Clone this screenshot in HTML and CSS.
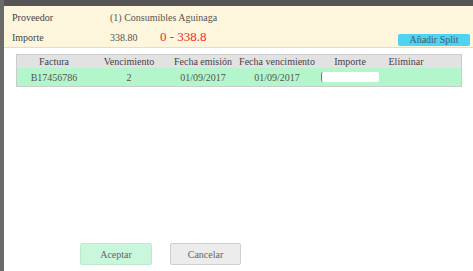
FILE: index.html
```html
<!DOCTYPE html>
<html>
<head>
<meta charset="utf-8">
<link rel="stylesheet" href="styles.css">
</head>
<body>
<div class="backdrop">
  <div class="modal">
    <div class="head">
      <div class="hrow">
        <span class="lbl">Proveedor</span>
        <span class="val">(1) Consumibles Aguinaga</span>
      </div>
      <div class="hrow">
        <span class="lbl">Importe</span>
        <span class="val amt">338.80</span>
        <span class="diff">0 - 338.8</span>
        <button class="split">Añadir Split</button>
      </div>
    </div>
    <div class="body">
      <table class="grid">
        <thead>
          <tr>
            <th class="c1">Factura</th>
            <th class="c2">Vencimiento</th>
            <th class="c3">Fecha emisión</th>
            <th class="c4">Fecha vencimiento</th>
            <th class="c5">Importe</th>
            <th class="c6">Eliminar</th>
            <th class="c7"></th>
          </tr>
        </thead>
        <tbody>
          <tr>
            <td>B17456786</td>
            <td>2</td>
            <td>01/09/2017</td>
            <td>01/09/2017</td>
            <td><input class="inp" type="text"></td>
            <td></td>
            <td></td>
          </tr>
        </tbody>
      </table>
    </div>
    <div class="foot">
      <button class="btn ok">Aceptar</button>
      <button class="btn cancel">Cancelar</button>
    </div>
  </div>
</div>
</body>
</html>
```
FILE: styles.css
```css
html, body {
  margin: 0;
  padding: 0;
  width: 473px;
  height: 271px;
  overflow: hidden;
  font-family: "Liberation Serif", "Times New Roman", serif;
  font-size: 10px;
  color: #333;
}
.backdrop {
  width: 473px;
  height: 271px;
  background: #555;
  border-left: 4px solid #6a6a6a;
  box-sizing: border-box;
  padding-top: 6px;
}
.modal {
  background: #fff;
  height: 265px;
  display: flex;
  flex-direction: column;
}
.head {
  background: #fdf6dc;
  border-bottom: 1px solid #ddd;
  height: 42px;
  box-sizing: border-box;
  padding: 2px 3px 0 8px;
  display: flex;
  flex-direction: column;
}
.hrow {
  display: flex;
  align-items: center;
  height: 20px;
}
.lbl {
  width: 98px;
  color: #444;
}
.val {
  color: #555;
}
.amt {
  width: 50px;
}
.diff {
  color: #f02a2a;
  font-size: 13px;
  font-family: "Liberation Serif", serif;
}
.split {
  margin-left: auto;
  margin-top: 5px;
  width: 72px;
  height: 12px;
  padding: 0;
  border: none;
  border-radius: 2px;
  background: #4fd3f0;
  color: #3a6070;
  font-family: "Liberation Serif", serif;
  font-size: 10px;
  line-height: 12px;
}
.body {
  flex: 1;
  padding: 6px 11px 0 12px;
}
.grid {
  width: 446px;
  border-collapse: collapse;
  border: 1px solid #ccc;
  font-size: 10px;
}
.grid th {
  background: #e2e2e2;
  font-weight: normal;
  color: #444;
  height: 13px;
  padding: 0;
  text-align: center;
}
.grid td {
  background: #b4f6cb;
  height: 18px;
  padding: 0;
  text-align: center;
  color: #555;
}
.c1 { width: 74px; }
.c2 { width: 76px; }
.c3 { width: 72px; }
.c4 { width: 76px; }
.c5 { width: 70px; }
.c6 { width: 42px; }
.inp {
  width: 53px;
  height: 10px;
  border: none;
  border-radius: 2px;
  background: #fff;
  padding: 0 2px;
  display: block;
  margin-left: 6px;
  border-left: 1px solid #777;
}
.foot {
  display: flex;
  gap: 18px;
  padding: 0 0 6px 76px;
  height: 22px;
}
.btn {
  width: 72px;
  height: 22px;
  font-family: "Liberation Serif", serif;
  font-size: 10px;
  border-radius: 2px;
  color: #666;
}
.ok {
  background: #c9f7dc;
  border: 1px solid #bfe8cf;
}
.cancel {
  width: 71px;
  background: #ececec;
  border: 1px solid #cfcfcf;
}
```
